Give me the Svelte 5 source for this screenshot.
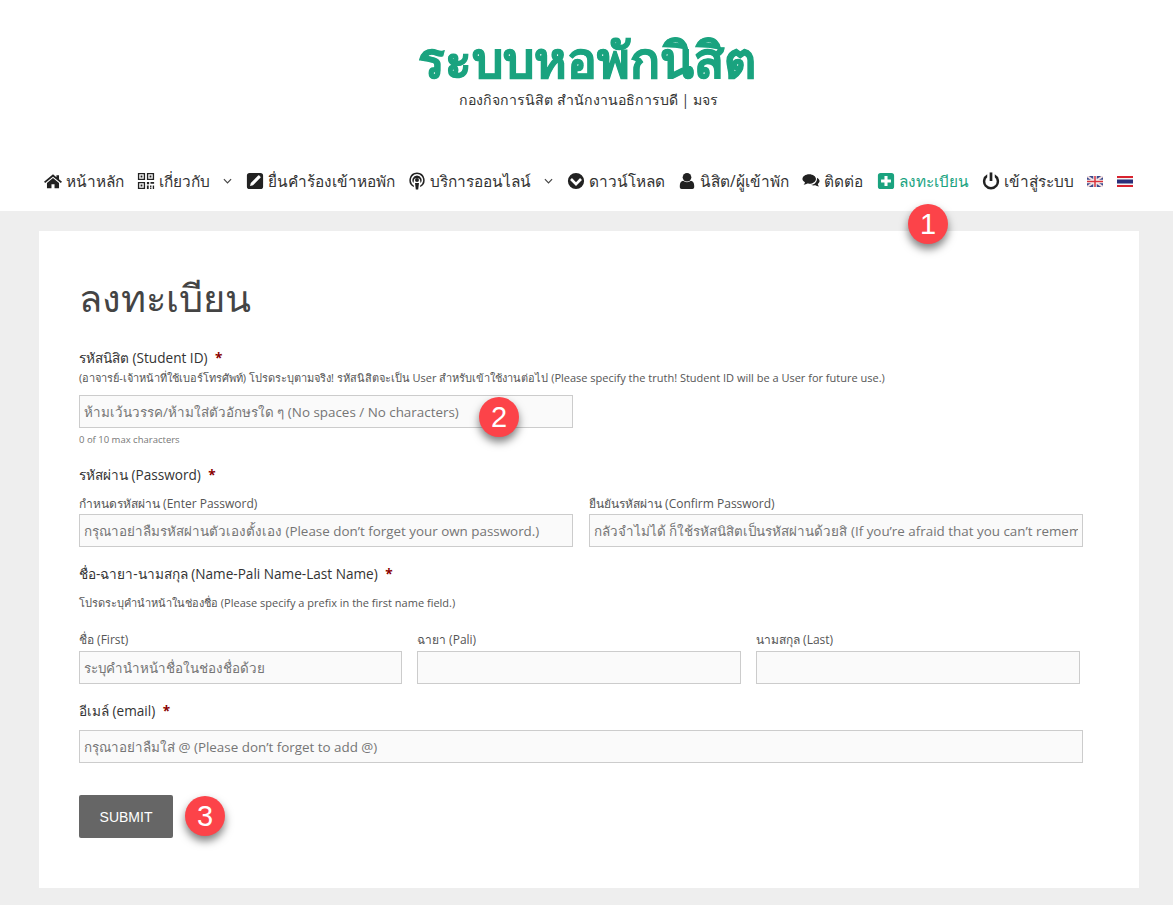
<script>
	const menu = [
		{ icon: 'home', label: 'หน้าหลัก' },
		{ icon: 'qr', label: 'เกี่ยวกับ', caret: true },
		{ icon: 'edit', label: 'ยื่นคำร้องเข้าหอพัก' },
		{ icon: 'pod', label: 'บริการออนไลน์', caret: true },
		{ icon: 'down', label: 'ดาวน์โหลด' },
		{ icon: 'user', label: 'นิสิต/ผู้เข้าพัก' },
		{ icon: 'chat', label: 'ติดต่อ' },
		{ icon: 'plus', label: 'ลงทะเบียน', active: true },
		{ icon: 'power', label: 'เข้าสู่ระบบ' }
	];
</script>

{#snippet icon(name)}
	<svg class="ic" viewBox="0 0 20 20" aria-hidden="true">
		{#if name === 'home'}
			<path d="M10 2.500 0 10.800l1.300 1.500L10 5.200l8.700 7.100 1.300-1.500-3.300-2.700V3.500h-2.900v2.200z" />
			<path d="M10 6.800 3.300 12.300V18h5v-4.300h3.400V18h5v-5.700z" />
		{:else if name === 'qr'}
			<path fill-rule="evenodd" d="M1 1h8v8H1zm1.500 1.500v5h5v-5zM11 1h8v8h-8zm1.500 1.500v5h5v-5zM1 11h8v8H1zm1.500 1.500v5h5v-5zM4 4h2v2H4zm10 0h2v2h-2zM4 14h2v2H4zM11 11h2.500v2.500H11zm4 0h4v2h-4zm-4 4h2v4h-2zm3.500 0H16v2h-1.500zm3 0H19v4h-1.500zm-3 2.500H16V19h-1.500z" />
		{:else if name === 'edit'}
			<path fill-rule="evenodd" d="M4 1h12a3 3 0 0 1 3 3v12a3 3 0 0 1-3 3H4a3 3 0 0 1-3-3V4a3 3 0 0 1 3-3zm9.500 3L5.300 12.200 4.500 15.500l3.300-.8L16 6.500a.9.900 0 0 0 0-1.300L14.800 4a.9.900 0 0 0-1.300 0z" />
		{:else if name === 'pod'}
			<path fill-rule="evenodd" d="M10 .5a8.500 8.500 0 0 1 3.300 16.300l.3-1.900a6.800 6.800 0 1 0-7.200 0l.3 1.900A8.500 8.500 0 0 1 10 .5zm0 3.400a5.100 5.100 0 0 1 3.900 8.400l-.3-1.900a3.600 3.600 0 1 0-7.200 0l-.3 1.900A5.100 5.100 0 0 1 10 3.900z" />
			<circle cx="10" cy="9" r="2.200" />
			<path d="M7.800 12.300h4.400l-.9 7.200H8.700z" />
		{:else if name === 'down'}
			<path fill-rule="evenodd" d="M10 1a9 9 0 1 1 0 18 9 9 0 0 1 0-18zM5.500 6.800 3.400 9l6.600 6.500L16.600 9l-2.100-2.200L10 11.300z" />
		{:else if name === 'user'}
			<circle cx="10" cy="5.800" r="4.800" />
			<path d="M5.800 9.800c1.100 1 2.600 1.500 4.200 1.500s3.100-.5 4.200-1.500c2.400.3 3.800 2.400 3.800 5.400v1.600c0 1.200-.9 2.200-2 2.200H4c-1.100 0-2-1-2-2.200v-1.600c0-3 1.400-5.100 3.800-5.400z" />
		{:else if name === 'chat'}
			<path d="M8 2.500c4.200 0 7.500 2.400 7.500 5.300s-3.300 5.300-7.500 5.300c-.7 0-1.300-.1-2-.2-1 .8-2.400 1.300-4.200 1.400.9-.9 1.400-1.800 1.500-2.900C1.600 10.500.5 9.200.5 7.800c0-2.900 3.300-5.300 7.500-5.300z" />
			<path d="M16.700 6.300c1.700.8 2.800 2.200 2.800 3.800 0 1.300-.7 2.400-2 3.300.1 1 .6 1.900 1.500 2.800-1.800-.1-3.200-.6-4.200-1.400-1.800.3-3.500.1-4.800-.6 3.900-.3 7-3 6.700-7.900z" />
		{:else if name === 'plus'}
			<path fill-rule="evenodd" d="M4 1h12a3 3 0 0 1 3 3v12a3 3 0 0 1-3 3H4a3 3 0 0 1-3-3V4a3 3 0 0 1 3-3zm4.300 3.500v3.800H4.500v3.400h3.800v3.800h3.400v-3.800h3.800V8.300h-3.800V4.500z" />
		{:else if name === 'power'}
			<path d="M8.500.5h3v9.500h-3z" />
			<path d="M5.800 2.400v3.300a6.300 6.300 0 1 0 8.400 0V2.400a9 9 0 1 1-8.400 0z" />
		{/if}
	</svg>
{/snippet}

<header>
	<div class="brand">
		<h1>ระบบหอพักนิสิต</h1>
		<p>กองกิจการนิสิต สำนักงานอธิการบดี | มจร</p>
	</div>
	<nav>
		{#each menu as item}
			<a href="#top" class="item" class:active={item.active}>
				{@render icon(item.icon)}
				<span>{item.label}</span>
				{#if item.caret}
					<svg class="caret" viewBox="0 0 10 6" aria-hidden="true"><path d="M1 1l4 4 4-4" /></svg>
				{/if}
			</a>
		{/each}
		<svg class="flag" viewBox="0 0 16 11" aria-hidden="true">
			<rect width="16" height="11" fill="#3d4a8c" />
			<path d="M0 0l16 11M16 0 0 11" stroke="#f3dede" stroke-width="2" />
			<path d="M8 0v11M0 5.500h16" stroke="#f4f4f4" stroke-width="3.500" />
			<path d="M8 0v11M0 5.500h16" stroke="#d8323c" stroke-width="1.500" />
		</svg>
		<svg class="flag" viewBox="0 0 16 11" aria-hidden="true">
			<rect width="16" height="11" fill="#f4f4f4" />
			<rect width="16" height="2" fill="#d8232f" />
			<rect y="9" width="16" height="2" fill="#d8232f" />
			<rect y="3.500" width="16" height="4" fill="#2a2f7a" />
		</svg>
	</nav>
	<b class="badge one">1</b>
</header>

<main>
	<section class="card">
		<h2>ลงทะเบียน</h2>
		<form>
			<div class="field student">
				<div class="label">รหัสนิสิต (Student ID) <i>*</i></div>
				<div class="desc">(อาจารย์-เจ้าหน้าที่ใช้เบอร์โทรศัพท์) โปรดระบุตามจริง! รหัสนิสิตจะเป็น User สำหรับเข้าใช้งานต่อไป (Please specify the truth! Student ID will be a User for future use.)</div>
				<div class="short">
					<input placeholder="ห้ามเว้นวรรค/ห้ามใส่ตัวอักษรใด ๆ (No spaces / No characters)" />
					<b class="badge two">2</b>
				</div>
				<div class="count">0 of 10 max characters</div>
			</div>

			<div class="field password">
				<div class="label">รหัสผ่าน (Password) <i>*</i></div>
				<div class="cols two-cols">
					<label>
						<span>กำหนดรหัสผ่าน (Enter Password)</span>
						<input placeholder="กรุณาอย่าลืมรหัสผ่านตัวเองตั้งเอง (Please don’t forget your own password.)" />
					</label>
					<label>
						<span>ยืนยันรหัสผ่าน (Confirm Password)</span>
						<input placeholder="กลัวจำไม่ได้ ก็ใช้รหัสนิสิตเป็นรหัสผ่านด้วยสิ (If you’re afraid that you can’t remember)" />
					</label>
				</div>
			</div>

			<div class="field name">
				<div class="label">ชื่อ-ฉายา-นามสกุล (Name-Pali Name-Last Name) <i>*</i></div>
				<div class="desc prefix">โปรดระบุคำนำหน้าในช่องชื่อ (Please specify a prefix in the first name field.)</div>
				<div class="cols three-cols">
					<label>
						<span>ชื่อ (First)</span>
						<input placeholder="ระบุคำนำหน้าชื่อในช่องชื่อด้วย" />
					</label>
					<label>
						<span>ฉายา (Pali)</span>
						<input />
					</label>
					<label>
						<span>นามสกุล (Last)</span>
						<input />
					</label>
				</div>
			</div>

			<div class="field mail">
				<div class="label">อีเมล์ (email) <i>*</i></div>
				<input placeholder="กรุณาอย่าลืมใส่ @ (Please don’t forget to add @)" />
			</div>

			<div class="actions">
				<button type="button">SUBMIT</button>
				<b class="badge three">3</b>
			</div>
		</form>
	</section>
</main>

<style>
	:global(body) {
		background: #eee;
		font-family: "Open Sans", "Noto Sans", "Liberation Sans", sans-serif;
		color: #333;
	}

	header {
		position: relative;
		background: #fff;
		height: 211px;
	}

	.brand {
		text-align: center;
		padding-top: 28px;
		height: 151px;
		box-sizing: border-box;
	}

	h1 {
		margin: 0;
		font-size: 49.500px;
		line-height: 62px;
		font-weight: 700;
		color: #1aa37f;
		-webkit-text-stroke: 1px #1aa37f;
	}

	.brand p {
		margin: 0;
		padding-left: 4px;
		font-size: 14.100px;
		line-height: 20px;
		color: #333;
	}

	nav {
		display: flex;
		align-items: center;
		padding: 0 40px 0 44px;
		height: 60px;
		justify-content: space-between;
	}

	.item {
		display: flex;
		align-items: center;
		gap: 4px;
		color: #333;
		text-decoration: none;
		font-size: 15.400px;
		white-space: nowrap;
	}

	.item.active {
		color: #1aa37f;
	}

	.ic {
		width: 18px;
		height: 18px;
		fill: #222;
		flex: none;
	}

	.active .ic {
		fill: #1aa37f;
	}

	.caret {
		width: 9px;
		height: 6px;
		margin-left: 9px;
		fill: none;
		stroke: #444;
		stroke-width: 1.300;
	}

	.flag {
		width: 16px;
		height: 11px;
		flex: none;
	}

	main {
		padding: 20px 34px 17px 39px;
	}

	.card {
		background: #fff;
		padding: 40px;
		height: 657px;
		box-sizing: border-box;
	}

	h2 {
		margin: 0 0 26px;
		font-size: 38px;
		line-height: 52px;
		font-weight: 300;
		color: #444;
	}

	.label {
		font-size: 13.600px;
		line-height: 18px;
		color: #333;
	}

	.label i {
		color: #8a0000;
		font-style: normal;
		font-weight: 700;
		margin-left: 4px;
	}

	.desc {
		margin-top: 3px;
		font-size: 11px;
		line-height: 16px;
		color: #555;
		white-space: nowrap;
	}

	input {
		display: block;
		width: 100%;
		height: 33px;
		box-sizing: border-box;
		padding: 0 4px;
		background: #fafafa;
		border: 1px solid #ccc;
		font-family: inherit;
		font-size: 13.400px;
		color: #666;
		outline: none;
	}

	input::placeholder {
		color: #757575;
		opacity: 1;
	}

	.short {
		position: relative;
		width: 494px;
		margin-top: 9px;
	}

	.count {
		margin-top: 5px;
		font-size: 9.500px;
		line-height: 14px;
		color: #777;
	}

	.password {
		margin-top: 19px;
	}

	.cols {
		display: grid;
		margin-top: 12px;
	}

	.two-cols {
		grid-template-columns: 494px 494px;
		column-gap: 16px;
	}

	.three-cols {
		grid-template-columns: 323px 324px 324px;
		column-gap: 15px;
	}

	.cols span {
		display: block;
		font-size: 12px;
		line-height: 16px;
		margin-bottom: 2px;
		color: #555;
	}

	.name {
		margin-top: 18px;
	}

	.prefix {
		margin-top: 12px;
	}

	.name .cols {
		margin-top: 21px;
	}

	.name .cols span {
		margin-bottom: 3px;
	}

	.mail {
		margin-top: 18px;
		width: 1004px;
	}

	.mail input {
		margin-top: 10px;
	}

	.actions {
		position: relative;
		margin-top: 32px;
	}

	button {
		width: 94px;
		height: 43px;
		background: #666;
		border: 0;
		border-radius: 2px;
		color: #fff;
		font-family: "Liberation Sans", sans-serif;
		font-size: 14px;
	}

	.badge {
		position: absolute;
		width: 40px;
		height: 40px;
		border-radius: 50%;
		background: #fc4349;
		color: #fff;
		font-family: "Liberation Sans", sans-serif;
		font-weight: 400;
		font-size: 29px;
		line-height: 40px;
		text-align: center;
		box-shadow: 0 5px 8px rgba(0, 0, 0, .5);
	}

	.one {
		left: 908px;
		top: 204px;
	}

	.two {
		left: 400px;
		top: 2px;
	}

	.three {
		left: 106px;
		top: 1px;
	}
</style>
